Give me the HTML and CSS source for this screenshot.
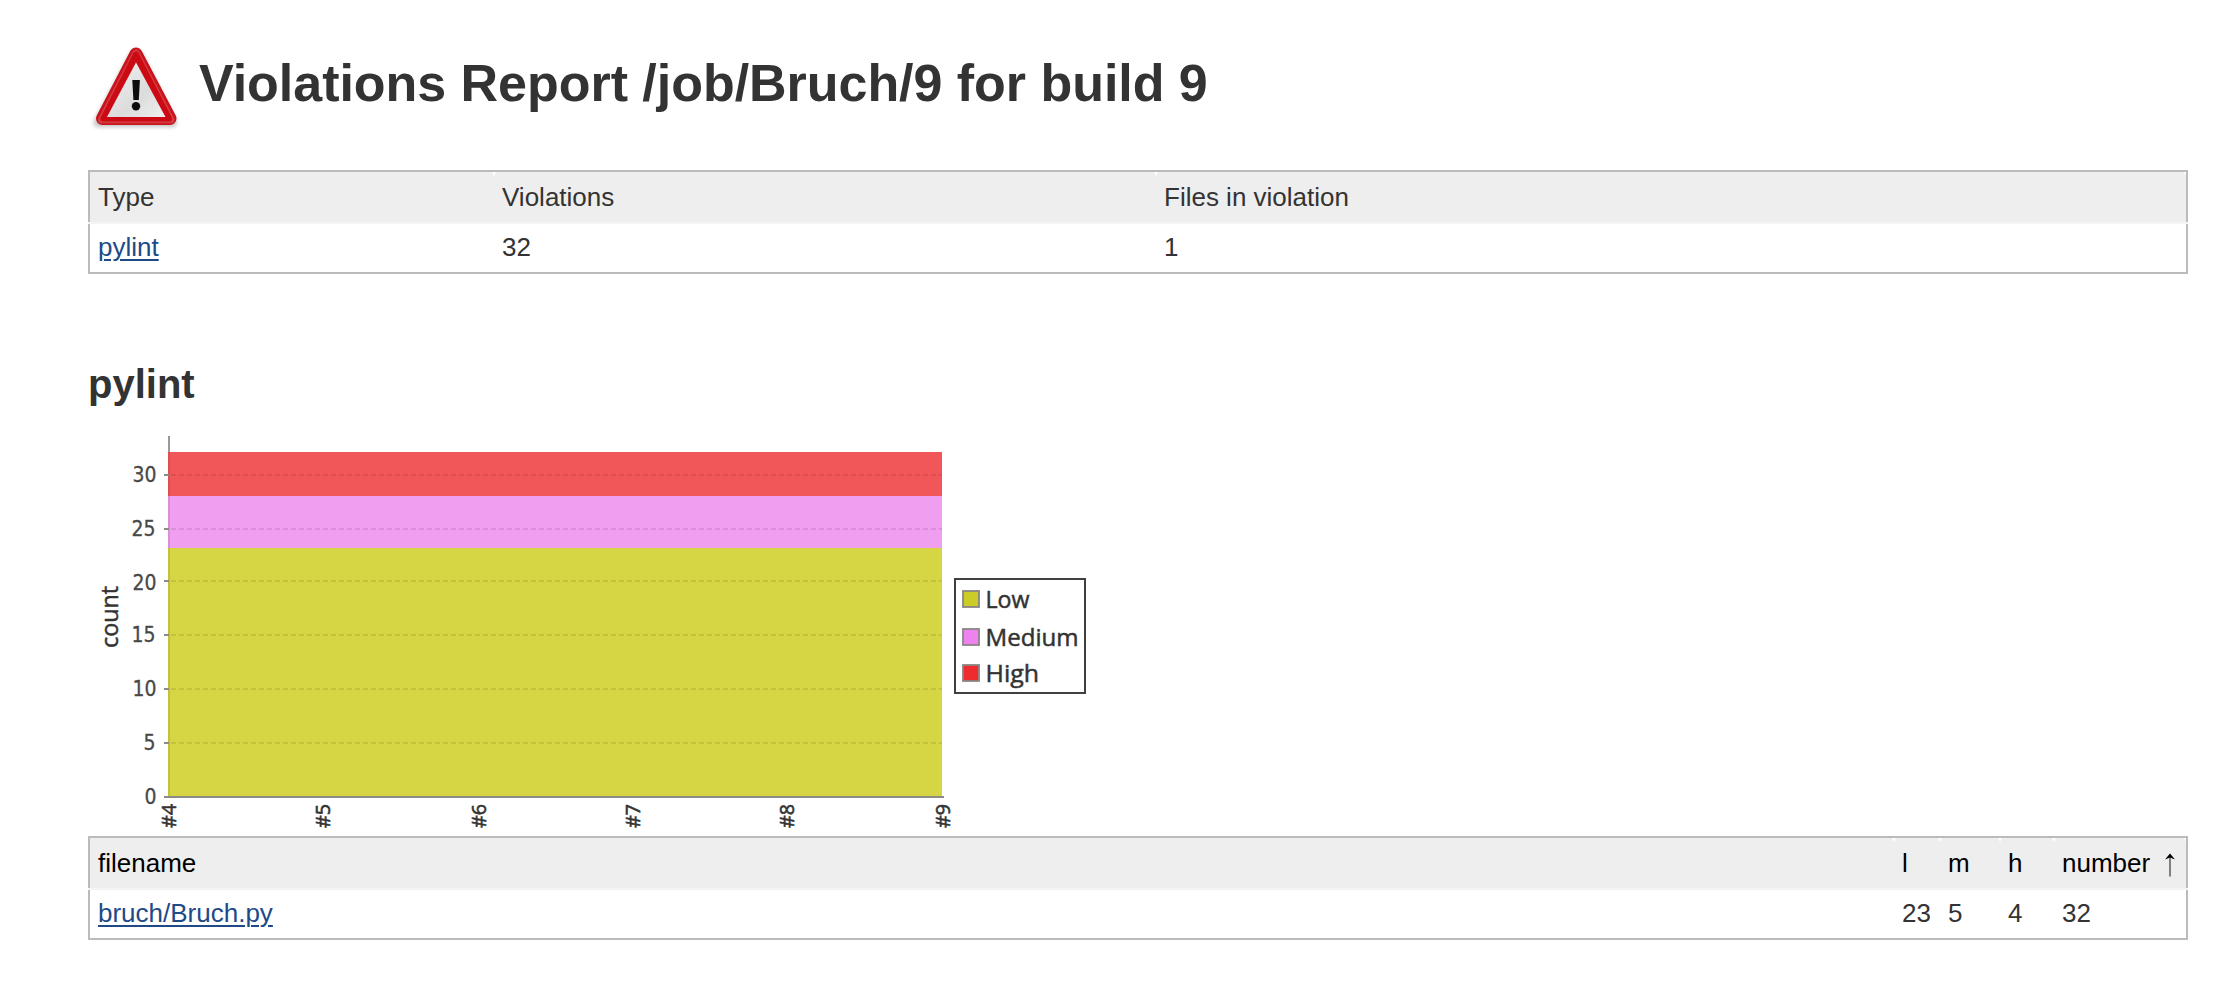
FILE: index.html
```html
<!DOCTYPE html>
<html lang="en">
<head>
<meta charset="utf-8">
<title>Violations Report</title>
<link rel="stylesheet" href="styles.css">
</head>
<body>
<main class="page">
  <header class="title">
    <svg class="title-icon" viewBox="88 40 96 96" width="96" height="96" aria-hidden="true">
      <defs>
        <linearGradient id="face" x1="0" y1="0" x2="1" y2="1"><stop offset="0" stop-color="#f2f2f2"/><stop offset=".6" stop-color="#dcdcdc"/><stop offset="1" stop-color="#f0f0f0"/></linearGradient>
        <filter id="soft" x="-20%" y="-20%" width="140%" height="140%"><feGaussianBlur stdDeviation="2"/></filter>
      </defs>
      <path d="M131 51 L94 121 Q92 127 100 127 H172 Q179 127 176 120 L141 51Z" fill="#000" opacity=".24" filter="url(#soft)"/>
      <path d="M136 54 L102.500 118.500 H170Z" fill="#c8141c" stroke="#c8141c" stroke-width="13" stroke-linejoin="round"/>
      <path d="M136 53 L101.500 119.800 H171Z" fill="none" stroke="#d43c42" stroke-width="7" stroke-linejoin="round"/>
      <path d="M136 54.500 L103.500 118.500 H169Z" fill="none" stroke="#cc0a14" stroke-width="6" stroke-linejoin="round"/>
      <path d="M136 62.500 L107 117 H165.500Z" fill="url(#face)"/>
      <path d="M132.300 80 H139.900 L138.800 100 H133.400Z" fill="#0c0c0c"/>
      <circle cx="136" cy="106.300" r="4.200" fill="#0c0c0c"/>
    </svg>
    <h1>Violations Report /job/Bruch/9 for build 9</h1>
  </header>

  <section class="table summary">
    <div class="row head">
      <div class="cell">Type</div><div class="cell">Violations</div><div class="cell">Files in violation</div>
    </div>
    <div class="rule"></div>
    <div class="row body">
      <div class="cell"><a href="#pylint">pylint</a></div><div class="cell">32</div><div class="cell">1</div>
    </div>
  </section>

  <h2 id="pylint">pylint</h2>

  <svg class="chart" viewBox="88 434 1000 402" width="1000" height="402">
    <path d="M169 436V797" stroke="#999" stroke-width="2"/>
    <rect x="168" y="452" width="774" height="44" fill="#f15659"/>
    <rect x="168" y="496" width="774" height="52" fill="#f09eef"/>
    <rect x="168" y="548" width="774" height="248" fill="#d6d644"/>
    <g stroke="#000" stroke-opacity=".09" stroke-width="2">
      <path d="M169 452V796"/>
      <path d="M171 475H942M171 529H942M171 581H942M171 635H942M171 689H942M171 743H942" stroke-dasharray="5 3"/>
    </g>
    <path d="M164 475h5M164 529h5M164 581h5M164 635h5M164 689h5M164 743h5M164 797H944" stroke="#8c8c84" stroke-width="2"/>
    <g class="tick" text-anchor="end">
      <text x="156.500" y="482" textLength="24" lengthAdjust="spacingAndGlyphs">30</text>
      <text x="155.500" y="536" textLength="24" lengthAdjust="spacingAndGlyphs">25</text>
      <text x="156.500" y="589.500" textLength="24" lengthAdjust="spacingAndGlyphs">20</text>
      <text x="155.500" y="642" textLength="24" lengthAdjust="spacingAndGlyphs">15</text>
      <text x="156.500" y="695.500" textLength="24" lengthAdjust="spacingAndGlyphs">10</text>
      <text x="155.500" y="749.500" textLength="12" lengthAdjust="spacingAndGlyphs">5</text>
      <text x="156.500" y="803.500" textLength="12" lengthAdjust="spacingAndGlyphs">0</text>
    </g>
    <g class="build">
      <text transform="translate(176 828) rotate(-90)" textLength="24" lengthAdjust="spacingAndGlyphs">#4</text>
      <text transform="translate(330 828) rotate(-90)" textLength="24" lengthAdjust="spacingAndGlyphs">#5</text>
      <text transform="translate(485.500 828) rotate(-90)" textLength="24" lengthAdjust="spacingAndGlyphs">#6</text>
      <text transform="translate(640 828) rotate(-90)" textLength="24" lengthAdjust="spacingAndGlyphs">#7</text>
      <text transform="translate(794 828) rotate(-90)" textLength="24" lengthAdjust="spacingAndGlyphs">#8</text>
      <text transform="translate(950 828) rotate(-90)" textLength="24" lengthAdjust="spacingAndGlyphs">#9</text>
    </g>
    <text class="label" transform="translate(118 648) rotate(-90)" textLength="62" lengthAdjust="spacingAndGlyphs">count</text>
    <rect x="955" y="579" width="130" height="114" fill="#fff" stroke="#404040" stroke-width="2"/>
    <g stroke="#8a8585" stroke-width="1.800">
      <rect x="963" y="591" width="16" height="16" fill="#cccc29"/>
      <rect x="963" y="629" width="16" height="16" fill="#ee82ee"/>
      <rect x="963" y="665" width="16" height="16" fill="#ee2c2f"/>
    </g>
    <g class="label">
      <text x="985.500" y="608" textLength="44" lengthAdjust="spacingAndGlyphs">Low</text>
      <text x="985.500" y="646" textLength="93" lengthAdjust="spacingAndGlyphs">Medium</text>
      <text x="985.500" y="682" textLength="53.500" lengthAdjust="spacingAndGlyphs">High</text>
    </g>
  </svg>

  <section class="table files">
    <div class="row head">
      <div class="cell">filename</div><div class="cell">l</div><div class="cell">m</div><div class="cell">h</div>
      <div class="cell sorted">number
        <svg class="arrow" viewBox="0 0 12 24" width="12" height="24" aria-hidden="true"><path d="M6 2V23.500" stroke="#444" stroke-width="1.300"/><path d="M6 0.500L11 6.500L6 4.500L1 6.500Z"/></svg>
      </div>
    </div>
    <div class="rule"></div>
    <div class="row body">
      <div class="cell"><a href="#file">bruch/Bruch.py</a></div><div class="cell">23</div><div class="cell">5</div><div class="cell">4</div><div class="cell">32</div>
    </div>
  </section>
</main>
</body>
</html>
```
FILE: styles.css
```css
* { box-sizing: border-box; }
body {
  margin: 0;
  background: #fff;
  color: #333;
  font: 26px "Liberation Sans", Arial, Helvetica, sans-serif;
}
.page { display: flow-root; padding: 0 30px 0 88px; }
.title { display: flex; height: 170px; padding-top: 40px; align-items: flex-start; }
.title-icon { flex: none; margin-right: 15px; }
h1 { margin: 13px 0 0; font-size: 52px; line-height: 60px; letter-spacing: -0.035px; white-space: nowrap; }
h2 { margin: 88px 0 0; height: 72px; font-size: 40px; line-height: 44px; }
.row {
  display: grid;
  border: 0 solid #bbb;
  border-left-width: 2px;
  border-right-width: 2px;
}
.summary .row { grid-template-columns: 404px 662px 1fr; }
.files .row { grid-template-columns: 1804px 46px 60px 54px 1fr; }
.cell { padding-left: 8px; white-space: nowrap; }
.head { height: 52px; border-top-width: 2px; line-height: 50px; background: #eee; }
.body { height: 50px; border-bottom-width: 2px; line-height: 46px; }
.rule { height: 2px; background: #f4f4f4; }
/* small white notches between the header cells */
.head .cell { position: relative; }
.head .cell::after {
  content: "";
  position: absolute;
  top: 0;
  right: -2px;
  width: 4px;
  height: 4px;
  background: #fff;
  clip-path: polygon(0 0, 100% 0, 50% 100%);
}
.head .cell:last-child::after { right: 0; width: 2px; clip-path: polygon(0 0, 100% 0, 100% 100%); }
a { color: #204a87; text-decoration: underline; text-decoration-thickness: 2px; text-underline-offset: 3px; }
.files .head { color: #000; }
.sorted { display: flex; align-items: center; gap: 14px; }
.arrow { margin-top: 4px; }
.chart { display: block; }
.tick { font: 22px "DejaVu Sans Condensed", "DejaVu Sans", sans-serif; fill: #484848; stroke: #484848; stroke-width: .3; }
.build { font: 20px "Open Sans", sans-serif; fill: #333; stroke: #333; stroke-width: .6; }
.label { font: 24px "Open Sans", sans-serif; fill: #333; stroke: #333; stroke-width: .5; }
```
